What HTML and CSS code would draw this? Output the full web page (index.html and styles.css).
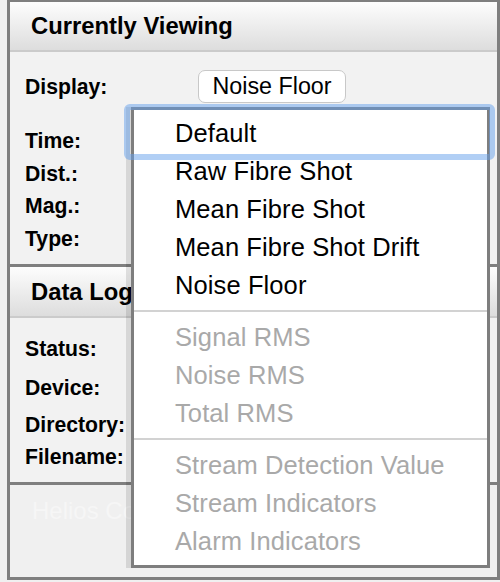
FILE: index.html
```html
<!DOCTYPE html>
<html>
<head>
<meta charset="utf-8">
<link rel="stylesheet" href="styles.css">
</head>
<body>
<div class="frame">
  <section class="panel">
    <div class="panel-head">Currently Viewing</div>
    <div class="panel-body viewing">
      <div class="row display-row">
        <span class="label">Display:</span>
        <button class="select-btn">Noise Floor</button>
      </div>
      <div class="info-list">
        <div class="label">Time:</div>
        <div class="label">Dist.:</div>
        <div class="label">Mag.:</div>
        <div class="label">Type:</div>
      </div>
    </div>
  </section>
  <section class="panel">
    <div class="panel-head">Data Log</div>
    <div class="panel-body log">
      <div class="label r-status">Status:</div>
      <div class="label r-device">Device:</div>
      <div class="label r-dir">Directory:</div>
      <div class="label r-file">Filename:</div>
    </div>
  </section>
  <section class="panel faded">
    <div class="faded-title">Helios Control</div>
  </section>

  <div class="menu">
    <div class="opt focused">Default</div>
    <div class="opt">Raw Fibre Shot</div>
    <div class="opt">Mean Fibre Shot</div>
    <div class="opt">Mean Fibre Shot Drift</div>
    <div class="opt">Noise Floor</div>
    <div class="sep"></div>
    <div class="opt disabled">Signal RMS</div>
    <div class="opt disabled">Noise RMS</div>
    <div class="opt disabled">Total RMS</div>
    <div class="sep"></div>
    <div class="opt disabled">Stream Detection Value</div>
    <div class="opt disabled">Stream Indicators</div>
    <div class="opt disabled">Alarm Indicators</div>
  </div>
</div>
</body>
</html>
```
FILE: styles.css
```css
html, body {
  margin: 0;
  padding: 0;
  background: #f0f0f0;
  font-family: "Liberation Sans", Arial, sans-serif;
  color: #000;
}

.frame {
  position: relative;
  margin-left: 7px;
  width: 487px;
  height: 575px;
  border: 3px solid #7f7f7f;
  border-top-width: 2px;
  background: #f2f2f2;
  display: flex;
  flex-direction: column;
}

.panel + .panel {
  border-top: 3px solid #7f7f7f;
}

.panel-head {
  height: 48px;
  line-height: 48px;
  padding-left: 21px;
  font-weight: bold;
  font-size: 23.8px;
  background: linear-gradient(#fdfdfd, #dddddd);
  border-bottom: 2px solid #cbcbcb;
}

.panel:nth-child(2) .panel-head {
  height: 49px;
  line-height: 49px;
}

.panel-body {
  background: #f2f2f2;
  padding-left: 15px;
}

.label {
  font-weight: bold;
  font-size: 21.2px;
}

.viewing {
  height: 194px;
  padding-top: 18px;
}

.display-row {
  display: grid;
  grid-template-columns: 173px auto;
  align-items: center;
  height: 33px;
}

.select-btn {
  justify-self: start;
  width: 148px;
  height: 33px;
  padding: 0;
  background: #fff;
  border: 1px solid #c8c8c8;
  border-radius: 7px;
  font-family: "Liberation Sans", Arial, sans-serif;
  font-size: 23.3px;
  color: #000;
}

.info-list {
  margin-top: 22px;
  line-height: 32.5px;
}

.log {
  height: 149px;
  padding-top: 15px;
}

.log .label {
  line-height: 32px;
}

.r-device { margin-top: 7px; }
.r-dir { margin-top: 5px; }

.faded {
  flex: 1;
  background: #f0f0f0;
}

.faded-title {
  padding: 12px 0 0 22px;
  font-size: 24px;
  color: #f6f6f6;
}

.menu {
  position: absolute;
  left: 121px;
  top: 105px;
  width: 353px;
  height: 451px;
  padding-top: 4px;
  background: #fff;
  border: 3px solid #7e7e7e;
  box-shadow: -5px 0 0 rgba(0, 0, 0, 0.11);
}

.opt {
  height: 38px;
  line-height: 38px;
  padding-left: 41px;
  font-size: 25.5px;
  letter-spacing: 0.1px;
  color: #000;
  white-space: nowrap;
}

.opt.disabled {
  color: #a9a9a9;
}

.opt.focused {
  position: relative;
}

.opt.focused::after {
  content: "";
  position: absolute;
  top: -10px;
  left: -10px;
  right: -8px;
  bottom: -8px;
  border: 6px solid rgba(100, 160, 235, 0.5);
  border-radius: 6px;
}

.sep {
  height: 2px;
  margin: 6px 0;
  background: #d2d2d2;
}
```
